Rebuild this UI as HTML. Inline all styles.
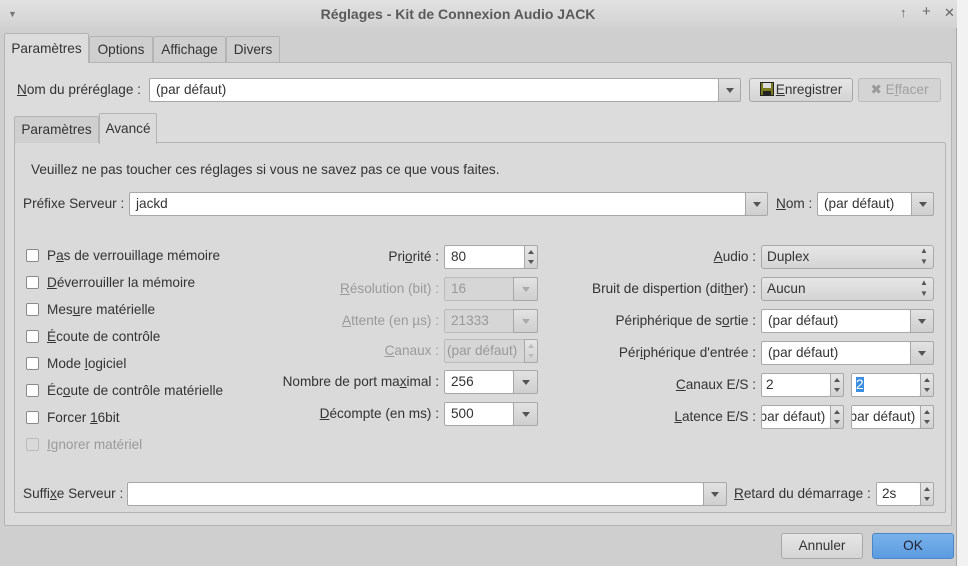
<!DOCTYPE html>
<html><head><meta charset="utf-8"><style>
*{box-sizing:border-box}
body{margin:0;width:968px;height:566px;overflow:hidden;background:#e8e8e8;font-family:"Liberation Sans","DejaVu Sans",sans-serif;font-size:13.6px;color:#333;position:relative}
.a{position:absolute}
#win{left:0;top:0;width:957px;height:566px;background:#cfcfcf;border-right:1px solid #aaa;border-top:1px solid #999}
#title{left:0;top:0;width:957px;height:28px;background:linear-gradient(#e2e2e2,#d2d2d2);}
.t{white-space:nowrap;line-height:18px}
.panel{background:#dcdcdc;border:1px solid #b4b4b4;border-radius:2px}
.tab{border:1px solid #b4b4b4;border-bottom:none;background:#cfcfcf;text-align:center;line-height:26px;border-radius:2px 2px 0 0}
.tab.s{background:#dcdcdc}
.in{background:#fff;border:1px solid #a8a8a8;border-radius:2px;padding-left:6px;line-height:22px;white-space:nowrap;overflow:hidden}
.dis{background:#d6d6d6;color:#999;border-color:#bbb}
.dd{background:linear-gradient(#e2e2e2,#cfcfcf);border:1px solid #a8a8a8;border-radius:0 2px 2px 0}
.dd:after{content:"";position:absolute;left:50%;top:50%;margin:-2px 0 0 -4px;border-left:4px solid transparent;border-right:4px solid transparent;border-top:5px solid #555}
.dd.dis:after{border-top-color:#aaa}
.sp{background:linear-gradient(#e6e6e6,#d2d2d2);border:1px solid #a8a8a8;border-radius:0 2px 2px 0;width:14px}
.sp:before{content:"";position:absolute;left:3px;top:4px;border-left:3px solid transparent;border-right:3px solid transparent;border-bottom:4px solid #555}
.sp:after{content:"";position:absolute;left:3px;bottom:4px;border-left:3px solid transparent;border-right:3px solid transparent;border-top:4px solid #555}
.sp.dis:before{border-bottom-color:#bbb}.sp.dis:after{border-top-color:#bbb}
.cb{width:13px;height:13px;border:1px solid #8a8a8a;border-radius:2px;background:#fff}
.btn{border:1px solid #a8a8a8;border-radius:3px;background:linear-gradient(#e6e6e6,#d4d4d4);text-align:center;line-height:22px}
.r{text-align:right}
u{text-decoration:underline}
.g{color:#9a9a9a}
</style></head><body>
<div class="a" style="left:956px;top:0;width:12px;height:566px;background:#f2f2f2;border-left:1px solid #999"></div>
<div class="a" id="win"></div>
<div class="a" id="title"></div>
<div class="a t" style="left:8px;top:5px;color:#777;font-size:9px">▼</div>
<div class="a t" style="left:0;width:916px;top:5px;text-align:center;font-weight:bold;color:#5a5a5a;font-size:14px">Réglages - Kit de Connexion Audio JACK</div>
<div class="a t" style="left:900px;top:4px;color:#666;font-size:13px">↑</div>
<div class="a t" style="left:922px;top:3px;color:#666;font-size:15px">+</div>
<div class="a t" style="left:944px;top:4px;color:#666;font-size:13px">✕</div>

<div class="a panel" style="left:4px;top:62px;width:948px;height:464px"></div>
<div class="a tab s" style="left:4px;top:33px;width:85px;height:30px;line-height:30px;border-bottom:none">Paramètres</div>
<div class="a tab" style="left:89px;top:36px;width:64px;height:26px">Options</div>
<div class="a tab" style="left:153px;top:36px;width:73px;height:26px">Affichage</div>
<div class="a tab" style="left:226px;top:36px;width:54px;height:26px">Divers</div>

<div class="a t" style="left:17px;top:81px"><u>N</u>om du préréglage :</div>
<div class="a in" style="left:149px;top:78px;width:570px;height:24px">(par défaut)</div>
<div class="a dd" style="left:718px;top:78px;width:23px;height:24px"></div>
<div class="a btn" style="left:749px;top:78px;width:104px;height:24px"><svg width="14" height="14" style="vertical-align:-2px;margin-right:2px"><rect x="0.5" y="0.5" width="13" height="13" fill="#7a7a20" stroke="#222"/><rect x="3" y="1" width="8" height="5" fill="#ddd"/><rect x="3" y="9" width="8" height="5" fill="#222"/></svg><u>E</u>nregistrer</div>
<div class="a btn" style="left:858px;top:78px;width:83px;height:24px;color:#a0a0a0;border-color:#bbb;background:#d4d4d4"><span style="font-weight:bold;color:#999">✖</span> E<u>f</u>facer</div>

<div class="a panel" style="left:14px;top:142px;width:932px;height:371px;background:#dadada"></div>
<div class="a tab" style="left:14px;top:116px;width:85px;height:27px">Paramètres</div>
<div class="a tab s" style="left:99px;top:113px;width:58px;height:31px;line-height:30px;background:#dadada">Avancé</div>

<div class="a t" style="left:31px;top:161px">Veuillez ne pas toucher ces réglages si vous ne savez pas ce que vous faites.</div>
<div class="a t" style="left:23px;top:195px">Préfixe Serveur :</div>
<div class="a in" style="left:129px;top:192px;width:617px;height:24px">jackd</div>
<div class="a dd" style="left:745px;top:192px;width:23px;height:24px"></div>
<div class="a t" style="left:776px;top:195px"><u>N</u>om :</div>
<div class="a in" style="left:817px;top:192px;width:95px;height:24px">(par défaut)</div>
<div class="a dd" style="left:911px;top:192px;width:23px;height:24px"></div>

<div class="a cb" style="left:26px;top:249px"></div><div class="a t" style="left:47px;top:247px">P<u>a</u>s de verrouillage mémoire</div>
<div class="a cb" style="left:26px;top:276px"></div><div class="a t" style="left:47px;top:274px"><u>D</u>éverrouiller la mémoire</div>
<div class="a cb" style="left:26px;top:303px"></div><div class="a t" style="left:47px;top:301px">Mes<u>u</u>re matérielle</div>
<div class="a cb" style="left:26px;top:330px"></div><div class="a t" style="left:47px;top:328px"><u>É</u>coute de contrôle</div>
<div class="a cb" style="left:26px;top:357px"></div><div class="a t" style="left:47px;top:355px">Mode <u>l</u>ogiciel</div>
<div class="a cb" style="left:26px;top:384px"></div><div class="a t" style="left:47px;top:382px">Éc<u>o</u>ute de contrôle matérielle</div>
<div class="a cb" style="left:26px;top:411px"></div><div class="a t" style="left:47px;top:409px">Forcer <u>1</u>6bit</div>
<div class="a cb" style="left:26px;top:438px;border-color:#bbb;background:#dadada"></div><div class="a t g" style="left:47px;top:436px"><u>I</u>gnorer matériel</div>

<div class="a t r" style="left:200px;width:239px;top:248px">Pri<u>o</u>rité :</div>
<div class="a in" style="left:444px;top:245px;width:81px;height:24px">80</div><div class="a sp" style="left:524px;top:245px;height:24px"></div>
<div class="a t r g" style="left:200px;width:239px;top:280px"><u>R</u>ésolution (bit) :</div>
<div class="a in dis" style="left:444px;top:277px;width:70px;height:24px">16</div><div class="a dd dis" style="left:513px;top:277px;width:25px;height:24px"></div>
<div class="a t r g" style="left:200px;width:239px;top:312px"><u>A</u>ttente (en µs) :</div>
<div class="a in dis" style="left:444px;top:309px;width:70px;height:24px">21333</div><div class="a dd dis" style="left:513px;top:309px;width:25px;height:24px"></div>
<div class="a t r g" style="left:200px;width:239px;top:342px"><u>C</u>anaux :</div>
<div class="a in dis" style="left:444px;top:339px;width:81px;height:24px;padding-left:2px">(par défaut)</div><div class="a sp dis" style="left:524px;top:339px;height:24px"></div>
<div class="a t r" style="left:200px;width:239px;top:373px">Nombre de port ma<u>x</u>imal :</div>
<div class="a in" style="left:444px;top:370px;width:70px;height:24px">256</div><div class="a dd" style="left:513px;top:370px;width:25px;height:24px"></div>
<div class="a t r" style="left:200px;width:239px;top:405px"><u>D</u>écompte (en ms) :</div>
<div class="a in" style="left:444px;top:402px;width:70px;height:24px">500</div><div class="a dd" style="left:513px;top:402px;width:25px;height:24px"></div>

<div class="a t r" style="left:540px;width:216px;top:248px"><u>A</u>udio :</div>
<div class="a btn" style="left:761px;top:245px;width:173px;height:24px;text-align:left;padding-left:5px">Duplex</div>
<div class="a t" style="left:920px;top:245px;font-size:8px;line-height:11px;color:#555">▲<br>▼</div>
<div class="a t r" style="left:540px;width:216px;top:280px">Bruit de dispertion (dit<u>h</u>er) :</div>
<div class="a btn" style="left:761px;top:277px;width:173px;height:24px;text-align:left;padding-left:5px">Aucun</div>
<div class="a t" style="left:920px;top:277px;font-size:8px;line-height:11px;color:#555">▲<br>▼</div>
<div class="a t r" style="left:540px;width:216px;top:312px">Périphérique de s<u>o</u>rtie :</div>
<div class="a in" style="left:761px;top:309px;width:150px;height:24px">(par défaut)</div><div class="a dd" style="left:910px;top:309px;width:24px;height:24px"></div>
<div class="a t r" style="left:540px;width:216px;top:344px">Pér<u>i</u>phérique d'entrée :</div>
<div class="a in" style="left:761px;top:341px;width:150px;height:24px">(par défaut)</div><div class="a dd" style="left:910px;top:341px;width:24px;height:24px"></div>
<div class="a t r" style="left:540px;width:216px;top:376px"><u>C</u>anaux E/S :</div>
<div class="a in" style="left:761px;top:373px;width:70px;height:24px;padding-left:4px">2</div><div class="a sp" style="left:830px;top:373px;height:24px"></div>
<div class="a in" style="left:851px;top:373px;width:70px;height:24px;padding-left:4px"><span style="background:#3b8ee0;color:#fff">2</span></div><div class="a sp" style="left:920px;top:373px;height:24px"></div>
<div class="a t r" style="left:540px;width:216px;top:408px"><u>L</u>atence E/S :</div>
<div class="a in" style="left:761px;top:405px;width:70px;height:24px;padding-left:0;text-indent:-7px">(par défaut)</div><div class="a sp" style="left:830px;top:405px;height:24px"></div>
<div class="a in" style="left:851px;top:405px;width:70px;height:24px;padding-left:0;text-indent:-7px">(par défaut)</div><div class="a sp" style="left:920px;top:405px;height:24px"></div>

<div class="a t" style="left:23px;top:485px">Suffi<u>x</u>e Serveur :</div>
<div class="a in" style="left:127px;top:482px;width:577px;height:24px"></div>
<div class="a dd" style="left:703px;top:482px;width:24px;height:24px"></div>
<div class="a t" style="left:734px;top:485px"><u>R</u>etard du démarrage :</div>
<div class="a in" style="left:876px;top:482px;width:45px;height:24px;padding-left:5px">2s</div><div class="a sp" style="left:920px;top:482px;height:24px"></div>

<div class="a btn" style="left:781px;top:533px;width:82px;height:26px;line-height:24px">Annuler</div>
<div class="a btn" style="left:872px;top:533px;width:82px;height:26px;line-height:24px;background:linear-gradient(#79b2ea,#5b9be0);border-color:#4a86c8;color:#223">OK</div>
</body></html>
